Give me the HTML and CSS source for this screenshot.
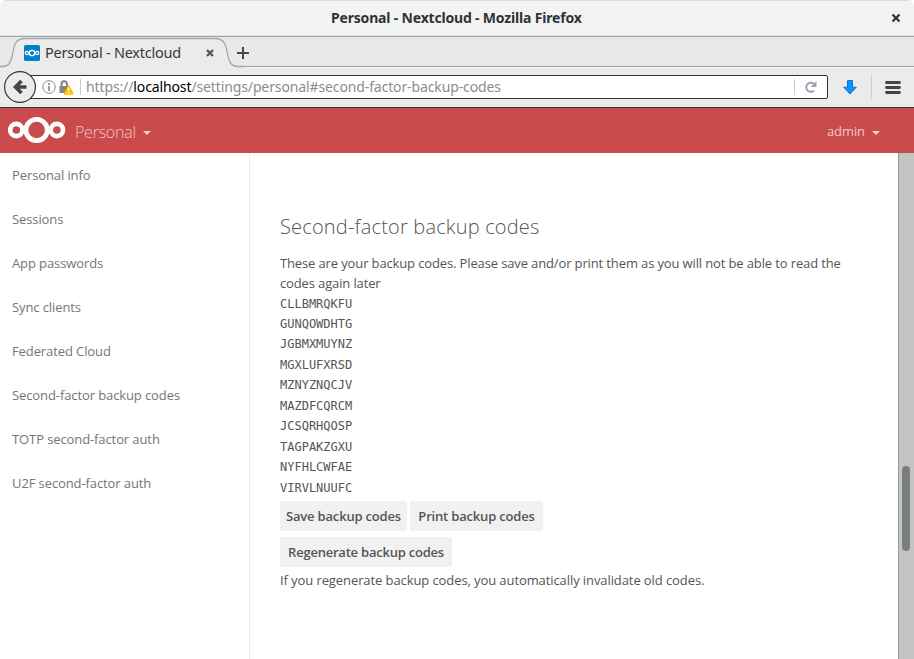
FILE: index.html
```html
<!DOCTYPE html>
<html lang="en">
<head>
<meta charset="utf-8">
<title>Personal - Nextcloud</title>
<link rel="stylesheet" href="styles.css">
</head>
<body>
<div class="window">
  <div class="titlebar">
    <span class="window-title">Personal - Nextcloud - Mozilla Firefox</span>
    <svg class="window-close" width="10" height="10" viewBox="0 0 10 10"><path d="M1.500 1.500l7 7M8.500 1.500l-7 7" stroke="#2e3436" stroke-width="2.300"/></svg>
  </div>
  <div class="tabs">
    <svg class="tab-shape" width="244" height="31" viewBox="0 0 244 31"><path d="M0 29.500H3C9 29.500 11 25 12.500 18 14 8 15 1.500 25 1.500H215C225 1.500 226 9 227.500 17 229 25 231 29.500 238 29.500H244V31H0Z" fill="#ebebeb"/><path d="M0 29.500H3C9 29.500 11 25 12.500 18 14 8 15 1.500 25 1.500H215C225 1.500 226 9 227.500 17 229 25 231 29.500 238 29.500H244" fill="none" stroke="#a2a6aa" stroke-width="1.300"/></svg>
    <div class="tab">
      <svg width="16" height="16" viewBox="0 0 16 16"><rect width="16" height="16" rx="1.500" fill="#0082c9"/><g fill="none" stroke="#fff" stroke-width="1.300"><circle cx="8" cy="8" r="2.700"/><circle cx="2.900" cy="8" r="1.600"/><circle cx="13.100" cy="8" r="1.600"/></g></svg>
      <span class="tab-title">Personal - Nextcloud</span>
      <svg class="tab-close" width="8" height="8" viewBox="0 0 8 8"><path d="M1 1l6 6M7 1L1 7" stroke="#555" stroke-width="2.300"/></svg>
    </div>
    <svg class="new-tab" width="12" height="12" viewBox="0 0 12 12"><path d="M6 0v12M0 6h12" stroke="#444a4c" stroke-width="2"/></svg>
  </div>
  <div class="toolbar">
    <svg class="back" width="32" height="32" viewBox="0 0 32 32"><circle cx="16" cy="16" r="15.400" fill="#ececec" stroke="#2e3436" stroke-width="1.200"/><path d="M22.500 16H11M17.500 10L11.500 16l6 6" fill="none" stroke="#454849" stroke-width="3.600"/></svg>
    <div class="urlbar">
      <svg class="info" width="14" height="14" viewBox="0 0 14 14"><circle cx="7" cy="7" r="6.300" fill="#fff" stroke="#8b8b8b" stroke-width="1"/><path d="M7 3v2M7 6v5" stroke="#858585" stroke-width="1.600"/></svg>
      <svg class="lock" width="15" height="15" viewBox="0 0 15 15"><path d="M2.500 7V4.500a2.700 3.200 0 0 1 5.400 0V7" fill="none" stroke="#858585" stroke-width="2"/><rect x="0.500" y="6" width="9" height="7" fill="#858585"/><path d="M9.700 5.500L14 14H5.400Z" fill="#ffbf00" stroke="#ffbf00" stroke-width="1.400" stroke-linejoin="round"/><path d="M9.700 7.500v3.500M9.700 12v1.400" stroke="#fff" stroke-width="1.300"/></svg>
      <span class="rule"></span>
      <span class="url">https://<b>localhost</b>/settings/personal#second-factor-backup-codes</span>
      <span class="rule reload-rule"></span>
      <svg class="reload" width="12" height="12" viewBox="0 0 12 12"><path d="M9 9.600A4.600 4.600 0 1 1 9.400 3.300" fill="none" stroke="#9aa4ae" stroke-width="2"/><path d="M11.500 0v6H5.800Z" fill="#9aa4ae"/></svg>
    </div>
    <svg class="download" width="14" height="15" viewBox="0 0 14 15"><path d="M4.500.5h5v6.700h3.800L7 14 .700 7.200h3.800Z" fill="#1492ff" stroke="#0b72d8"/></svg>
    <span class="menu-rule"></span>
    <svg class="menu" width="16" height="13" viewBox="0 0 16 13"><path d="M1.500 1.500h13M1.500 6.500h13M1.500 11.500h13" stroke="#414546" stroke-width="2.800" stroke-linecap="round"/></svg>
  </div>
  <header class="header">
    <svg class="logo" width="58" height="28" viewBox="0 0 58 28"><g fill="none" stroke="#fff"><circle cx="28.600" cy="14" r="10.700" stroke-width="4.800"/><circle cx="8.300" cy="14" r="6.100" stroke-width="4.600"/><circle cx="48.900" cy="14" r="6.100" stroke-width="4.600"/></g></svg>
    <span class="app-name">Personal</span><i class="caret"></i>
    <span class="user">admin</span><i class="caret"></i>
  </header>
  <div class="page">
    <nav class="sidebar">
      <a>Personal info</a><a>Sessions</a><a>App passwords</a><a>Sync clients</a><a>Federated Cloud</a><a>Second-factor backup codes</a><a>TOTP second-factor auth</a><a>U2F second-factor auth</a>
    </nav>
    <main class="content">
      <h2>Second-factor backup codes</h2>
      <p>These are your backup codes. Please save and/or print them as you will not be able to read the codes again later</p>
      <ul>
        <li>CLLBMRQKFU</li><li>GUNQOWDHTG</li><li>JGBMXMUYNZ</li><li>MGXLUFXRSD</li><li>MZNYZNQCJV</li><li>MAZDFCQRCM</li><li>JCSQRHQOSP</li><li>TAGPAKZGXU</li><li>NYFHLCWFAE</li><li>VIRVLNUUFC</li>
      </ul>
      <div class="actions"><button class="save">Save backup codes</button><button class="print">Print backup codes</button></div>
      <button class="regenerate">Regenerate backup codes</button>
      <p class="note">If you regenerate backup codes, you automatically invalidate old codes.</p>
    </main>
    <div class="scrollbar"><div class="thumb"></div></div>
  </div>
</div>
</body>
</html>
```
FILE: styles.css
```css
* { box-sizing: border-box; }
body { margin: 0; background: #fff; font-family: "Open Sans", sans-serif; }
svg { display: block; flex: none; }
.window { width: 914px; height: 659px; display: flex; flex-direction: column; overflow: hidden; border-radius: 6px 6px 0 0; white-space: nowrap; }
.titlebar { height: 37px; flex: none; display: flex; align-items: center; background: #f3f3f3; border-top: 1px solid #dedede; border-bottom: 1px solid #a0a09d; box-shadow: inset 0 -1px #e2e2e0; padding-bottom: 1px; }
.window-title { width: 251px; margin: -2px 0 0 331px; font: 700 14px "Noto Sans", sans-serif; letter-spacing: -0.18px; color: #2e3436; }
.window-close { margin-left: 309px; }
.tabs { height: 30px; flex: none; position: relative; display: flex; align-items: center; background: #e8e8e6; border-bottom: 1px solid #a0a09d; }
.tab-shape { position: absolute; left: 0; top: 0; }
.tab { position: relative; display: flex; align-items: center; width: 236px; padding: 2px 0 0 24px; }
.tab-title { width: 136px; margin: -2px 25px 0 5px; font: 14.500px "Noto Sans", sans-serif; letter-spacing: -0.25px; color: #35393b; }
.new-tab { position: relative; margin-top: 2px; margin-left: 1px; }
.toolbar { height: 41px; flex: none; display: flex; align-items: center; background: #ebebeb; border-bottom: 1px solid #2e3436; border-top: 1px solid #f3f3f3; padding: 0 0 1px 4px; }
.back { position: relative; z-index: 1; }
.urlbar { display: flex; align-items: center; width: 808px; height: 24px; margin-left: -16px; padding-left: 21px; background: #fff; border: 1px solid #2e3436; border-radius: 2px; }
.lock { margin: 0 6px 0 3px; }
.rule { width: 1px; height: 16px; background: #ccc; }
.url { width: 415px; margin: -2px 293px 0 5px; font: 14px "Noto Sans", sans-serif; letter-spacing: -0.12px; color: #8b8d8e; }
.url b { font-weight: 400; color: #000; }
.reload { margin-left: 10px; }
.download { margin-left: 15px; }
.menu-rule { width: 1px; height: 34px; margin: 0 13px 0 14px; background: linear-gradient(transparent, #ccc 25%, #ccc 75%, transparent); }
.header { height: 45px; flex: none; display: flex; align-items: center; background: #c94b4b; color: #edc8c8; padding-left: 8px; }
.logo { margin-top: -1px; }
.app-name { width: 61px; margin: 3px 7px 0 9px; font-size: 16px; font-weight: 300; letter-spacing: -0.25px; }
.caret { border: 4px solid transparent; border-top-color: #efd2d2; border-bottom: 0; margin-top: 5px; }
.user { width: 39px; margin: 1px 6px 0 676px; font-size: 13px; letter-spacing: -0.1px; }
.page { flex: 1; display: flex; min-height: 0; }
.sidebar { width: 250px; border-right: 1px solid #ebebeb; }
.sidebar a { display: block; height: 44px; padding-left: 12px; line-height: 44px; font-size: 13px; letter-spacing: -0.1px; color: #757575; }
.content { width: 648px; padding: 61px 30px 0; color: #555; font-size: 13px; white-space: normal; }
h2 { margin: 0 0 13px; font-size: 20px; line-height: 26px; font-weight: 300; letter-spacing: 0.18px; }
p { margin: 0; line-height: 20px; letter-spacing: -0.13px; }
.note { letter-spacing: -0.09px; }
ul { margin: 0; padding: 0.500px 0 0; list-style: none; font: 12px/20.450px "DejaVu Sans Mono", monospace; }
.actions { display: flex; gap: 3px; margin: 3px 0 6px; }
button { display: block; height: 30px; padding: 0; border: 0; border-radius: 2px; background: #f1f1f1; color: #555; font: 600 13px "Open Sans", sans-serif; letter-spacing: -0.18px; }
.save { width: 127px; }
.print { width: 133px; }
.regenerate { width: 172px; margin-bottom: 3px; letter-spacing: -0.22px; }
.scrollbar { width: 16px; border-left: 1px solid #999c98; background: #c3c5c5; padding: 313px 0 0 3px; }
.thumb { width: 8px; height: 85px; border-radius: 4px; background: #797d7e; }
```
